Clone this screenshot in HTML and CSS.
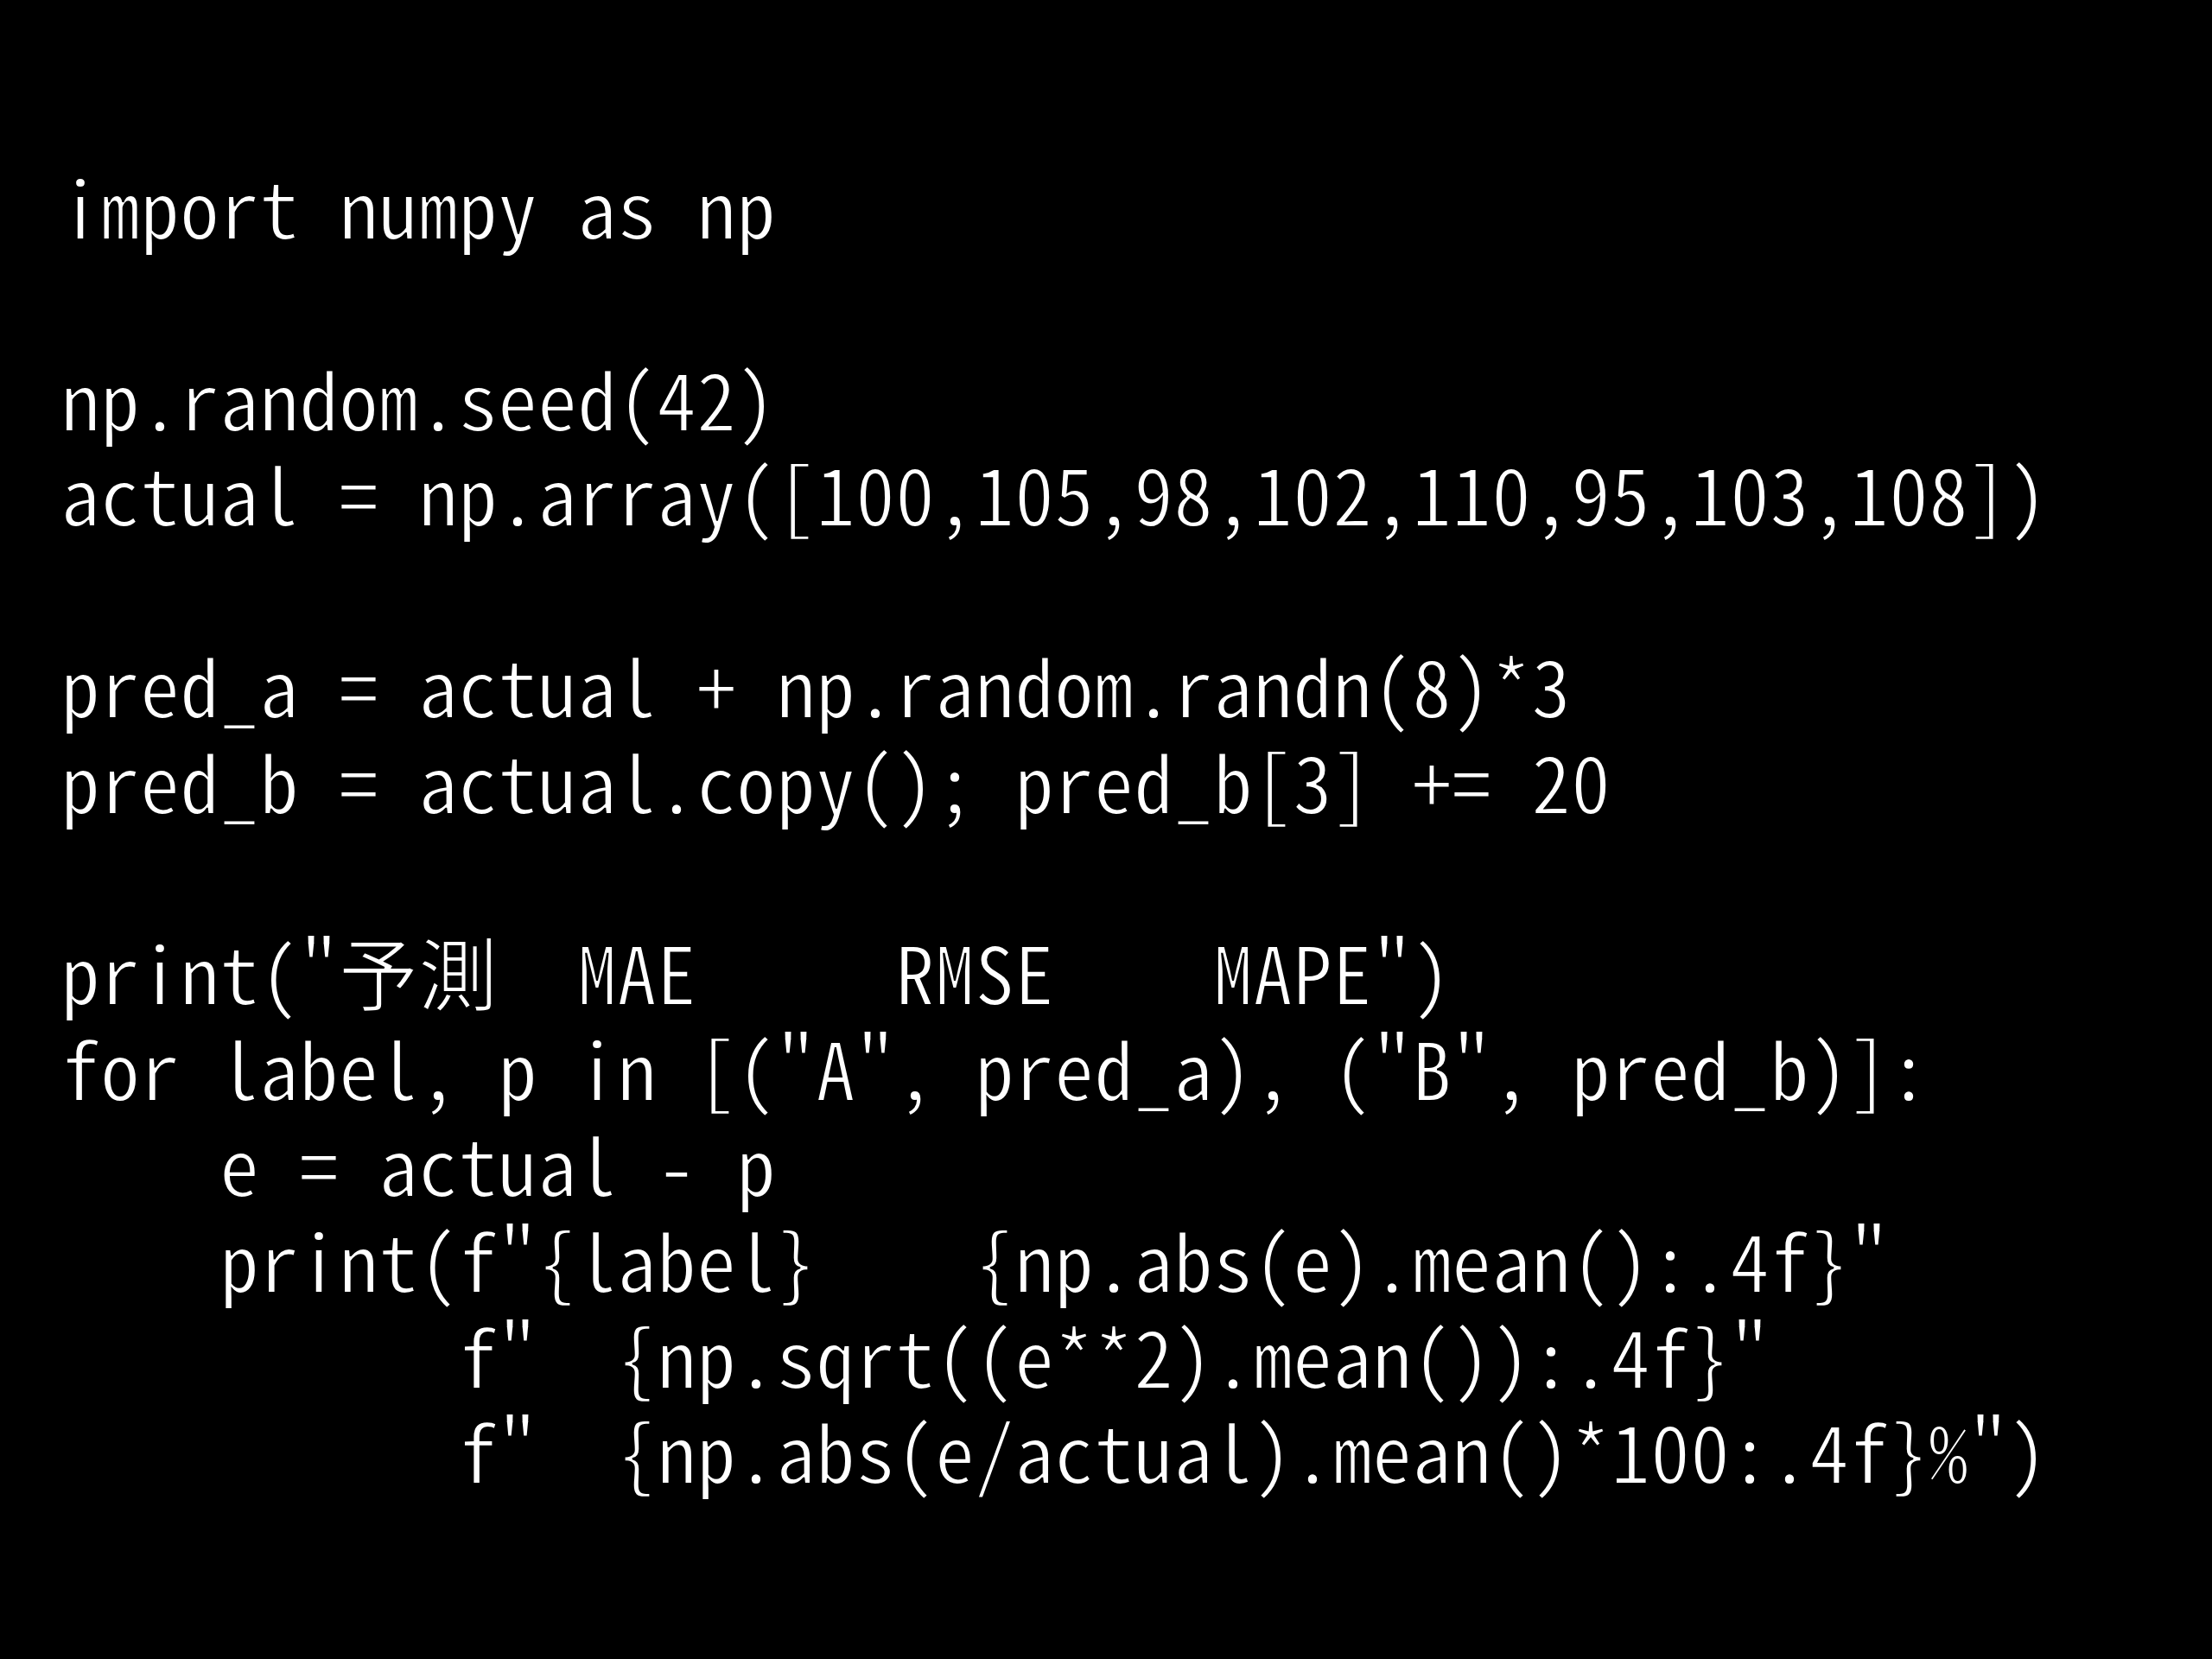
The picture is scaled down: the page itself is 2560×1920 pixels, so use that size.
FILE: index.html
```html
<!DOCTYPE html>
<html lang="ja">
<head>
<meta charset="utf-8">
<title>code</title>
<link rel="stylesheet" href="styles.css">
</head>
<body>
<main class="slide">
<pre class="code">import numpy as np

np.random.seed(42)
actual = np.array([100,105,98,102,110,95,103,108])

pred_a = actual + np.random.randn(8)*3
pred_b = actual.copy(); pred_b[3] += 20

print("予測  MAE     RMSE    MAPE")
for label, p in [("A", pred_a), ("B", pred_b)]:
    e = actual - p
    print(f"{label}    {np.abs(e).mean():.4f}"
          f"  {np.sqrt((e**2).mean()):.4f}"
          f"  {np.abs(e/actual).mean()*100:.4f}%")</pre>
</main>
</body>
</html>
```

FILE: styles.css
```css
html, body {
  margin: 0;
  padding: 0;
  background: #000;
}

.slide {
  width: 2560px;
  height: 1920px;
  background: #000;
  padding: 182px 0 0 70px;
  box-sizing: border-box;
  overflow: hidden;
}

.code {
  margin: 0;
  color: #fff;
  font-family: "Noto Sans Mono CJK JP", "Liberation Mono", "Noto Sans CJK JP", monospace;
  font-size: 92px;
  line-height: 110.8px;
  white-space: pre;
  -webkit-text-stroke: 2px #000;
}
```
